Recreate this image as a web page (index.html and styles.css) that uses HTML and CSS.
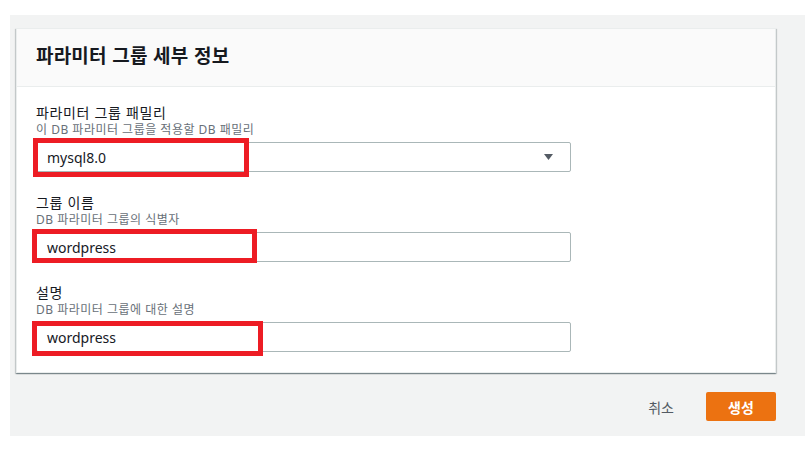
FILE: index.html
```html
<!DOCTYPE html>
<html lang="ko">
<head>
<meta charset="utf-8">
<title>파라미터 그룹 세부 정보</title>
<link rel="stylesheet" href="styles.css">
</head>
<body>
<div class="page">
  <section class="card">
    <header class="card-header">
      <h2 class="title">파라미터 그룹 세부 정보</h2>
    </header>
    <div class="card-body">
      <div class="field">
        <div class="label">파라미터 그룹 패밀리</div>
        <div class="desc">이 DB 파라미터 그룹을 적용할 DB 패밀리</div>
        <div class="control">
          <div class="select">
            <span class="value">mysql8.0</span>
            <svg class="caret" width="9" height="6" viewBox="0 0 9 6"><path d="M0 0H9L4.5 6Z" fill="#545b64"/></svg>
          </div>
          <div class="mark mark-1"></div>
        </div>
      </div>
      <div class="field">
        <div class="label">그룹 이름</div>
        <div class="desc">DB 파라미터 그룹의 식별자</div>
        <div class="control">
          <div class="input"><span class="value">wordpress</span></div>
          <div class="mark mark-2"></div>
        </div>
      </div>
      <div class="field">
        <div class="label">설명</div>
        <div class="desc">DB 파라미터 그룹에 대한 설명</div>
        <div class="control">
          <div class="input"><span class="value">wordpress</span></div>
          <div class="mark mark-3"></div>
        </div>
      </div>
    </div>
  </section>
  <div class="footer">
    <span class="cancel">취소</span>
    <span class="btn-primary">생성</span>
  </div>
</div>
</body>
</html>
```

FILE: styles.css
```css
* { box-sizing: border-box; }
html, body { margin: 0; padding: 0; background: #ffffff; }
body {
  font-family: "Noto Sans", "Noto Sans CJK KR", sans-serif;
  color: #16191f;
}
.page {
  margin: 15px 7px 0 10px;
  height: 421px;
  background: #f2f3f3;
  padding: 13px 29px 0 6px;
}
.card {
  background: #ffffff;
  border: 1px solid #eaeded;
  box-shadow: 0 1px 1px 0 rgba(0,28,36,.3), 1px 1px 1px 0 rgba(0,28,36,.15), -1px 1px 1px 0 rgba(0,28,36,.15);
}
.card-header {
  height: 58px;
  background: #fafafa;
  border-bottom: 1px solid #eaeded;
  padding: 13px 19px 0;
}
.title {
  margin: 0;
  font-family: "Noto Sans CJK KR", sans-serif;
  font-size: 19px;
  font-weight: 700;
  line-height: 26px;
  letter-spacing: 0.2px;
  color: #16191f;
}
.card-body {
  padding: 15px 204px 20px 19px;
  display: flex;
  flex-direction: column;
  gap: 20px;
}
.label {
  font-family: "Noto Sans CJK KR", sans-serif;
  font-size: 14px;
  line-height: 20px;
  letter-spacing: 0.6px;
  color: #16191f;
}
.desc {
  font-family: "Noto Sans", "Noto Sans CJK KR", sans-serif;
  font-size: 12px;
  line-height: 16px;
  letter-spacing: 0.5px;
  color: #687078;
  margin-bottom: 4px;
}
.control { position: relative; }
.select, .input {
  height: 30px;
  border: 1px solid #aab7b8;
  border-radius: 2px;
  background: #ffffff;
  display: flex;
  align-items: center;
  padding: 0 10px;
}
.select { justify-content: space-between; padding-right: 17px; }
.value {
  font-size: 14px;
  color: #16191f;
}
.caret { display: block; }
.mark {
  position: absolute;
  border: 5px solid #ed1c24;
  left: -3px;
}
.mark-1 { top: -4px; width: 216px; height: 39px; }
.mark-2 { top: -3px; left: -4px; width: 225px; height: 34px; }
.mark-3 { top: -1px; left: -4px; width: 231px; height: 35px; }
.footer {
  display: flex;
  justify-content: flex-end;
  align-items: center;
  gap: 32px;
  margin-top: 19px;
}
.cancel {
  font-family: "Noto Sans CJK KR", sans-serif;
  font-size: 14px;
  font-weight: 400;
  color: #545b64;
}
.btn-primary {
  width: 70px;
  height: 29px;
  background: #ec7211;
  border-radius: 2px;
  color: #ffffff;
  font-family: "Noto Sans CJK KR", sans-serif;
  font-size: 14px;
  font-weight: 700;
  display: flex;
  align-items: center;
  justify-content: center;
}
```
